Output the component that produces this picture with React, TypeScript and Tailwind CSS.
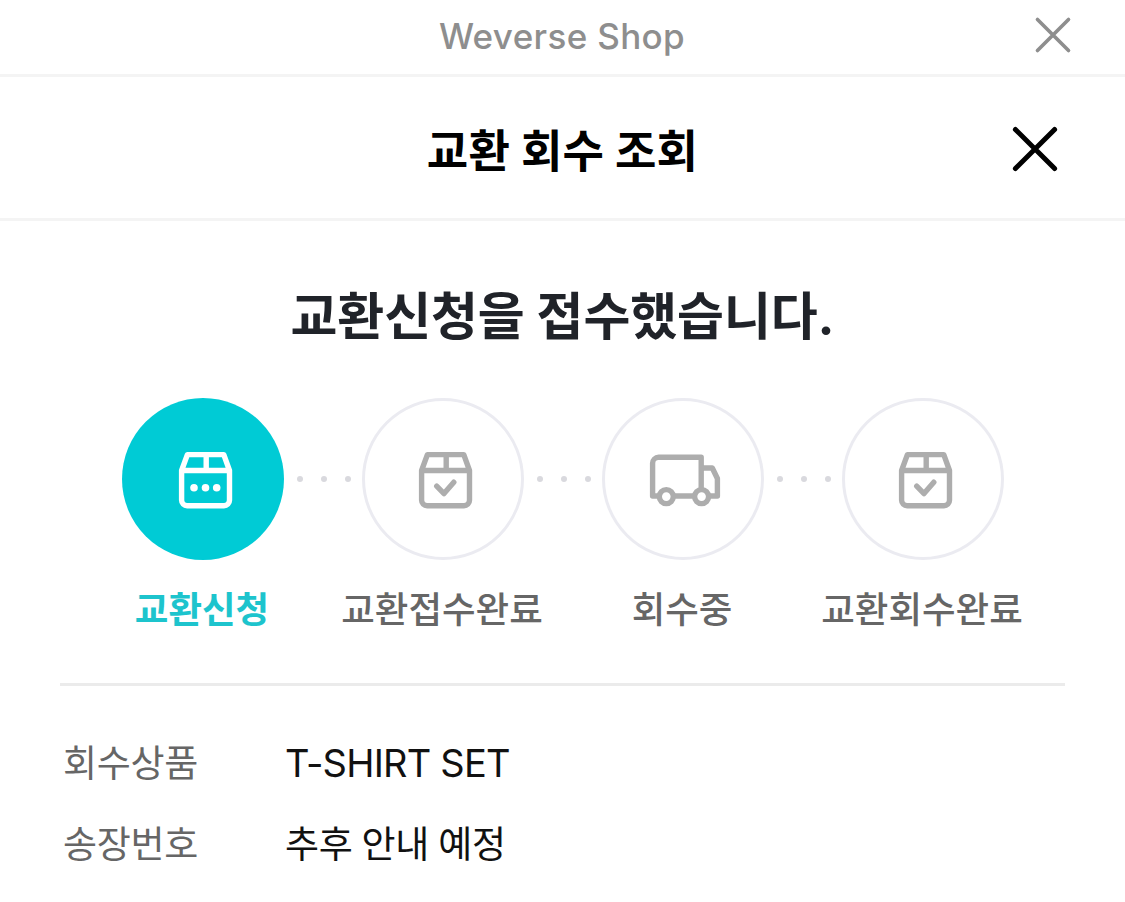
import React from "react";
import clsx from "clsx";

type IconName = "request" | "check" | "truck";

type Step = {
  label: string;
  icon: IconName;
  active?: boolean;
};

const STEPS: Step[] = [
  { label: "교환신청", icon: "request", active: true },
  { label: "교환접수완료", icon: "check" },
  { label: "회수중", icon: "truck" },
  { label: "교환회수완료", icon: "check" },
];

const CloseIcon = ({ className }: { className?: string }) => (
  <svg viewBox="0 0 48 48" fill="none" stroke="currentColor" strokeLinecap="round" className={className}>
    <path d="M4.4 4.4 43.6 43.6M43.6 4.4 4.4 43.6" />
  </svg>
);

const StepIcon = ({ name }: { name: IconName }) => (
  <svg
    viewBox="0 0 72 72"
    fill="none"
    stroke="currentColor"
    strokeWidth={5.4}
    strokeLinejoin="round"
    className="size-[72px] overflow-visible"
  >
    {name === "truck" ? (
      <>
        <path d="M12.5 53H5.6V20.3a6 6 0 0 1 6-6H54.2V46.5M26.5 53H47.5M54.2 25H65.3L70.4 35.5V53H62" />
        <circle cx="19.3" cy="53.6" r="7" />
        <circle cx="54.6" cy="53.6" r="7" />
      </>
    ) : (
      <>
        <path d="M14.6 27.5 20.4 11.6H56.8L62.5 27.5V57.3a5.5 5.5 0 0 1-5.5 5.5H20.1a5.5 5.5 0 0 1-5.5-5.5ZH62.5M39.2 11.6V27.5" />
        {name === "request" ? (
          <g fill="currentColor" stroke="none">
            <circle cx="27" cy="44.7" r="3.8" />
            <circle cx="38.5" cy="44.7" r="3.8" />
            <circle cx="49.7" cy="44.7" r="3.8" />
          </g>
        ) : (
          <path d="M29.7 43.2 37 50.6 46.8 39.2" strokeLinecap="round" />
        )}
      </>
    )}
  </svg>
);

const Dots = () => (
  <div className="flex w-[78px] items-center justify-center gap-[18px] pl-[3px]">
    {[0, 1, 2].map((i) => (
      <span key={i} className="size-1.5 rounded-full bg-[#d9d9de]" />
    ))}
  </div>
);

const InfoRow = ({ label, children }: { label: string; children: React.ReactNode }) => (
  <div className="flex h-[81px] items-center">
    <dt className="w-[222px] tracking-[-0.3px] text-[#666666]">{label}</dt>
    <dd className="text-[#111111]">{children}</dd>
  </div>
);

const App = () => {
  return (
    <div className="h-[902px] w-[1125px] overflow-hidden bg-white font-['Inter','Noto_Sans_CJK_KR',sans-serif]">
      {/* In-app browser bar */}
      <div className="flex h-[77px] items-center border-b-3 border-[#f4f4f4] pr-[53px] pl-[54px]">
        <span className="w-9" />
        <p className="-mt-[3px] flex-1 text-center text-[35px] leading-[40px] font-medium tracking-[0.35px] text-[#8e8e8e]">
          Weverse Shop
        </p>
        <button aria-label="Close" className="-mt-1 text-[#8e8e8e]">
          <CloseIcon className="size-[38px] stroke-[4.6]" />
        </button>
      </div>

      {/* Page header */}
      <header className="flex h-[144px] items-center border-b-3 border-[#f4f4f4] px-[66px] pt-0.5">
        <span className="w-12" />
        <h1 className="flex-1 pt-1.5 text-center text-[45px] font-bold tracking-[0.2px] text-black">교환 회수 조회</h1>
        <button aria-label="Close" className="text-black">
          <CloseIcon className="size-12 stroke-5" />
        </button>
      </header>

      <main>
        <h2 className="pt-[62px] text-center text-[51px] leading-[68px] font-bold tracking-[-0.1px] text-[#202329]">
          교환신청을 접수했습니다.
        </h2>

        {/* Progress */}
        <div className="mt-[47px] flex justify-center">
          {STEPS.map((step, i) => (
            <React.Fragment key={step.label}>
              {i > 0 && <Dots />}
              <div
                className={clsx(
                  "flex size-[162px] items-center justify-center rounded-full",
                  step.active ? "bg-[#00cbd5] text-white" : "border-3 border-[#ebebf1] text-[#adadad]"
                )}
              >
                <StepIcon name={step.icon} />
              </div>
            </React.Fragment>
          ))}
        </div>
        <div className="mt-[23px] mr-px flex justify-center text-[36.5px] leading-[54px]">
          {STEPS.map((step) => (
            <span
              key={step.label}
              className={clsx(
                "w-[240px] text-center",
                step.active ? "font-bold text-[#1dc4cd]" : "font-medium text-[#666666]"
              )}
            >
              {step.label}
            </span>
          ))}
        </div>

        <dl className="mx-[60px] mt-[46px] border-t-3 border-[#ebebeb] pt-[37px] pl-[3px] text-[37px]">
          <InfoRow label="회수상품">
            <span className="text-[38px] tracking-[-0.8px]">T-SHIRT SET</span>
          </InfoRow>
          <InfoRow label="송장번호">
            <span className="tracking-[-0.3px] [word-spacing:-1px]">추후 안내 예정</span>
          </InfoRow>
        </dl>
      </main>
    </div>
  );
};

export default App;
